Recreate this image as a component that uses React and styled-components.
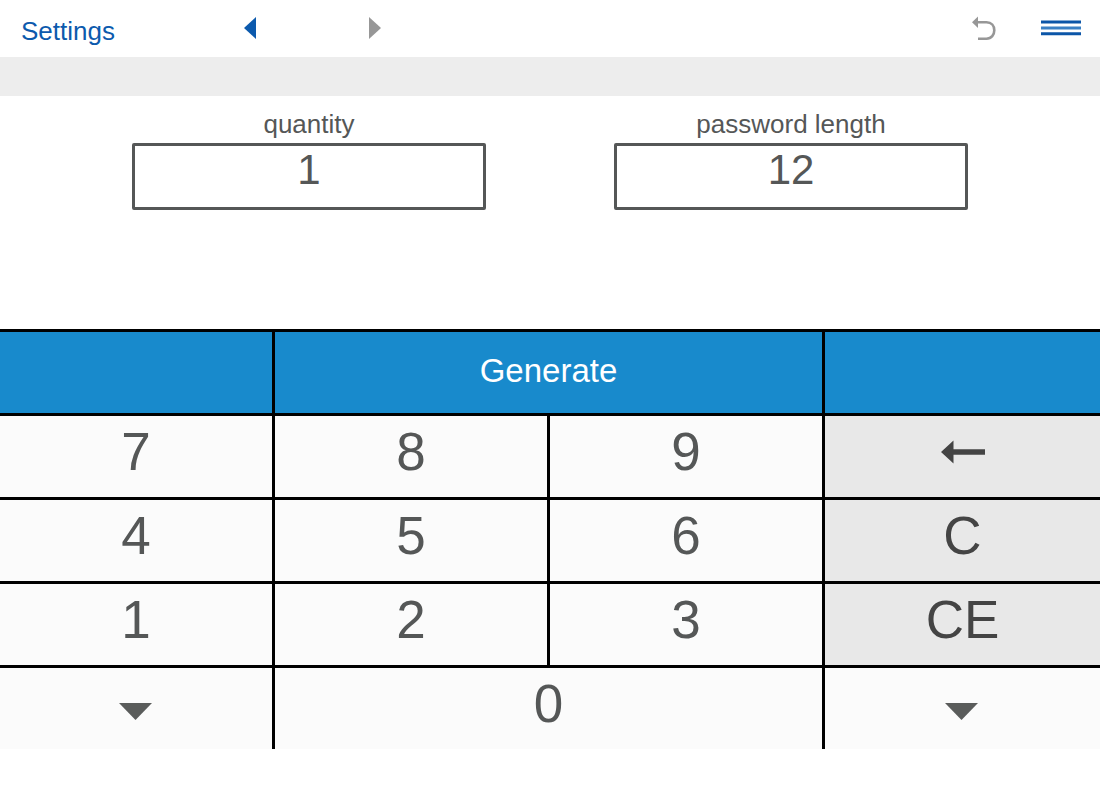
// src/App.jsx

import React, { useState } from 'react';
import styled, { createGlobalStyle, css } from 'styled-components';

const GlobalStyle = createGlobalStyle`
  *, *::before, *::after {
    box-sizing: border-box;
  }
  body {
    margin: 0;
    background: #fff;
    color: #555757;
    font-family: "Liberation Sans", Arial, Helvetica, sans-serif;
  }
  button, input {
    font: inherit;
    color: inherit;
  }
`;

const TopBar = styled.header`
  display: flex;
  align-items: center;
  justify-content: space-between;
  height: 57px;
  padding: 0 19px 2px 21px;
`;

const BarGroup = styled.div`
  display: flex;
  align-items: center;
  gap: ${({ $gap }) => $gap}px;
`;

const SettingsLink = styled.a`
  min-width: 110px;
  padding-top: 6px;
  color: #0c5aad;
  font-size: 26px;
  line-height: 30px;
  text-decoration: none;
`;

const IconButton = styled.button`
  display: flex;
  padding: 0;
  border: 0;
  background: none;
  color: ${({ $muted }) => ($muted ? '#979797' : '#0c5aad')};
  cursor: pointer;
`;

const Strip = styled.div`
  height: 39px;
  background: #ededed;
`;

const Fields = styled.div`
  display: grid;
  grid-template-columns: 1fr 1fr;
  column-gap: 128px;
  padding: 13px 12% 119px;
`;

const Field = styled.div`
  display: flex;
  flex-direction: column;
  gap: 4px;
`;

const FieldLabel = styled.label`
  font-size: 26px;
  line-height: 30px;
  text-align: center;
`;

const FieldInput = styled.input`
  width: 100%;
  height: 67px;
  padding: 0 0 14px;
  border: 3px solid #555757;
  border-radius: 2px;
  outline: none;
  background: #fff;
  font-size: 42px;
  text-align: center;
`;

const Keypad = styled.div`
  display: grid;
  grid-template-columns: repeat(4, 1fr);
  grid-auto-rows: 84px;
`;

const tones = {
  digit: css`
    background: #fbfbfb;
    color: #555757;
  `,
  edit: css`
    background: #e8e8e8;
    color: #444;
  `,
  action: css`
    padding-bottom: 4px;
    background: #188acc;
    color: #fff;
    font-size: 33px;
  `,
  drop: css`
    padding: 5px 2px 0 0;
    background: #fbfbfb;
    color: #5a5c5b;
  `,
};

const Key = styled.button`
  display: flex;
  align-items: center;
  justify-content: center;
  grid-column: span ${({ $span }) => $span || 1};
  padding: 0 0 10px;
  border: 0 solid #000;
  border-top-width: 3px;
  border-right-width: ${({ $last }) => ($last ? 0 : 3)}px;
  font-size: 53px;
  cursor: pointer;
  ${({ $tone }) => tones[$tone || 'digit']}
`;

const DropIcon = () => (
  <svg width="33" height="17" viewBox="0 0 33 17" aria-hidden="true">
    <path d="M0 0h33L16.500 17z" fill="currentColor" />
  </svg>
);

const BackIcon = () => (
  <svg width="44" height="24" viewBox="0 0 44 24" aria-hidden="true">
    <path d="M0 12L12.500 0.500V9.200H44V14.800H12.500V23.500z" fill="currentColor" />
  </svg>
);

const UndoIcon = () => (
  <svg width="24" height="27" viewBox="0 -2 24 27" fill="none" aria-hidden="true">
    <path d="M0 6.200L6 0.500V12z" fill="currentColor" />
    <path
      d="M5 6.200H14.500C19.500 6.200 22.300 9.700 22.300 14.200S19.500 22.700 14.500 22.700H6"
      stroke="currentColor"
      strokeWidth="2.600"
    />
  </svg>
);

const MenuIcon = () => (
  <svg width="40" height="16" viewBox="0 0 40 16" aria-hidden="true">
    <path d="M0 0.600h40v3H0zM0 12.200h40v3H0z" fill="#0c56a8" />
    <path d="M0 6.400h40v3H0z" fill="#3a80c4" />
  </svg>
);

export default function App() {
  const [values, setValues] = useState({ quantity: '1', length: '12' });
  const [active, setActive] = useState('quantity');

  const update = (name, value) =>
    setValues((prev) => ({ ...prev, [name]: value.replace(/\D/g, '') }));

  const press = (digit) => update(active, values[active] + digit);

  const digitKey = (digit, span) => (
    <Key key={digit} type="button" $span={span} onClick={() => press(digit)}>
      {digit}
    </Key>
  );

  return (
    <>
      <GlobalStyle />
      <TopBar>
        <BarGroup $gap={113}>
          <SettingsLink href="#settings">Settings</SettingsLink>
          <IconButton type="button" aria-label="Previous">
            <svg width="12" height="22" viewBox="0 0 12 22">
              <path d="M12 0v22L0 11z" fill="currentColor" />
            </svg>
          </IconButton>
          <IconButton type="button" aria-label="Next" $muted>
            <svg width="12" height="22" viewBox="0 0 12 22">
              <path d="M0 0v22L12 11z" fill="currentColor" />
            </svg>
          </IconButton>
        </BarGroup>
        <BarGroup $gap={45}>
          <IconButton type="button" aria-label="Undo" $muted>
            <UndoIcon />
          </IconButton>
          <IconButton type="button" aria-label="Menu">
            <MenuIcon />
          </IconButton>
        </BarGroup>
      </TopBar>
      <Strip />

      <main>
        <Fields>
          <Field>
            <FieldLabel htmlFor="quantity">quantity</FieldLabel>
            <FieldInput
              id="quantity"
              inputMode="numeric"
              value={values.quantity}
              onFocus={() => setActive('quantity')}
              onChange={(e) => update('quantity', e.target.value)}
            />
          </Field>
          <Field>
            <FieldLabel htmlFor="length">password length</FieldLabel>
            <FieldInput
              id="length"
              inputMode="numeric"
              value={values.length}
              onFocus={() => setActive('length')}
              onChange={(e) => update('length', e.target.value)}
            />
          </Field>
        </Fields>

        <Keypad>
          <Key type="button" $tone="action" aria-label="Left action" />
          <Key type="button" $tone="action" $span={2}>
            Generate
          </Key>
          <Key type="button" $tone="action" $last aria-label="Right action" />

          {['7', '8', '9'].map((d) => digitKey(d))}
          <Key
            type="button"
            $tone="edit"
            $last
            aria-label="Backspace"
            onClick={() => update(active, values[active].slice(0, -1))}
          >
            <BackIcon />
          </Key>

          {['4', '5', '6'].map((d) => digitKey(d))}
          <Key
            type="button"
            $tone="edit"
            $last
            onClick={() => setValues({ quantity: '', length: '' })}
          >
            C
          </Key>

          {['1', '2', '3'].map((d) => digitKey(d))}
          <Key type="button" $tone="edit" $last onClick={() => update(active, '')}>
            CE
          </Key>

          <Key type="button" $tone="drop" aria-label="More options, left">
            <DropIcon />
          </Key>
          {digitKey('0', 2)}
          <Key type="button" $tone="drop" $last aria-label="More options, right">
            <DropIcon />
          </Key>
        </Keypad>
      </main>
    </>
  );
}
